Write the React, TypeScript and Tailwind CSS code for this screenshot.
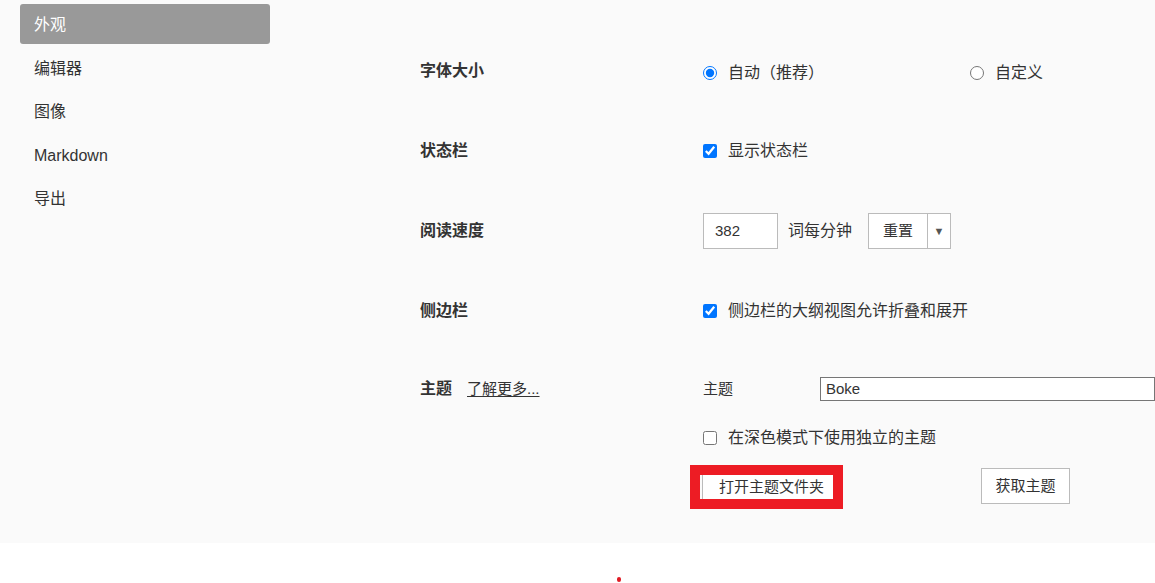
import { useState } from "react";

const font = { fontFamily: '"Liberation Sans", "Noto Sans CJK SC", sans-serif' };

const navItems = ["外观", "编辑器", "图像", "Markdown", "导出"];

function Row({ label, children }: { label: React.ReactNode; children: React.ReactNode }) {
  return (
    <div className="flex h-[80px] items-center">
      <div className="w-[283px] text-[16px] font-bold text-[#333]">{label}</div>
      <div className="flex flex-1 items-center">{children}</div>
    </div>
  );
}

export default function App() {
  const [active] = useState(0);

  return (
    <div className="w-[1155px] h-[583px] overflow-hidden bg-white text-[#333]" style={font}>
      <div className="flex h-[543px] bg-[#fafafa]">
        {/* sidebar */}
        <div className="w-[270px] shrink-0 pl-5 pt-1 flex flex-col gap-[3.5px]">
          {navItems.map((item, i) => (
            <div
              key={item}
              className={`flex h-[40px] items-center rounded-[3px] px-[14px] pt-[2px] text-[16px] ${
                i === active ? "bg-[#999999] text-white" : "text-[#333]"
              }`}
            >
              {item}
            </div>
          ))}
        </div>

        {/* settings */}
        <div className="ml-[150px] flex-1 pt-[31px]">
          <Row label="字体大小">
            <label className="flex w-[267px] items-center gap-[11px] pt-[3px] text-[16px]">
              <input type="radio" name="fs" defaultChecked className="m-0 h-[14px] w-[14px] accent-[#0075ff]" />
              自动（推荐）
            </label>
            <label className="flex items-center gap-[11px] pt-[3px] text-[16px]">
              <input type="radio" name="fs" className="m-0 h-[14px] w-[14px]" />
              自定义
            </label>
          </Row>

          <Row label="状态栏">
            <label className="flex items-center gap-[11px] text-[16px]">
              <input type="checkbox" defaultChecked className="m-0 h-[14px] w-[14px] accent-[#0075ff]" />
              显示状态栏
            </label>
          </Row>

          <Row label="阅读速度">
            <div className="flex h-[36px] w-[75px] items-center border border-[#bbb] bg-white pl-[11px] text-[15px]">
              382
            </div>
            <span className="ml-[10px] text-[16px]">词每分钟</span>
            <div className="ml-[16px] flex h-[36px] border border-[#bbb] bg-white">
              <div className="flex w-[59px] items-center justify-center border-r border-[#bbb] text-[15px]">重置</div>
              <div className="flex w-[22px] items-center justify-center text-[11px] text-[#555]">▼</div>
            </div>
          </Row>

          <Row label="侧边栏">
            <label className="flex items-center gap-[11px] text-[16px]">
              <input type="checkbox" defaultChecked className="m-0 h-[14px] w-[14px] accent-[#0075ff]" />
              侧边栏的大纲视图允许折叠和展开
            </label>
          </Row>

          {/* theme */}
          <div className="flex pt-[26px]">
            <div className="flex w-[283px] items-center gap-[15px] h-[24px]">
              <span className="text-[16px] font-bold">主题</span>
              <span className="text-[15px] underline underline-offset-2">了解更多...</span>
            </div>
            <div className="flex flex-1 flex-col">
              <div className="flex h-[24px] items-center">
                <span className="w-[117px] text-[15px]">主题</span>
                <div className="flex h-[24px] flex-1 items-center border border-[#767676] bg-white pl-[5px] text-[15px]">
                  Boke
                </div>
              </div>
              <label className="mt-[25px] flex items-center gap-[11px] text-[16px]">
                <input type="checkbox" className="m-0 h-[14px] w-[14px]" />
                在深色模式下使用独立的主题
              </label>
              <div className="mt-[15px] flex items-start">
                <div className="-ml-[13px] border-[10px] border-[#ed1c24]">
                  <div className="ml-[2px] flex h-[24px] w-[131px] items-center border-l border-[#bbb] bg-white pl-[16px] text-[15px]">
                    打开主题文件夹
                  </div>
                </div>
                <div className="ml-[138px] mt-[3px] flex h-[36px] w-[89px] items-center justify-center border border-[#bbb] bg-white text-[15px]">
                  获取主题
                </div>
              </div>
            </div>
          </div>
        </div>
      </div>

      <div className="pl-[617px] pt-[34px]">
        <div className="h-[5px] w-[4px] rounded-full bg-[#e01b24]" />
      </div>
    </div>
  );
}
